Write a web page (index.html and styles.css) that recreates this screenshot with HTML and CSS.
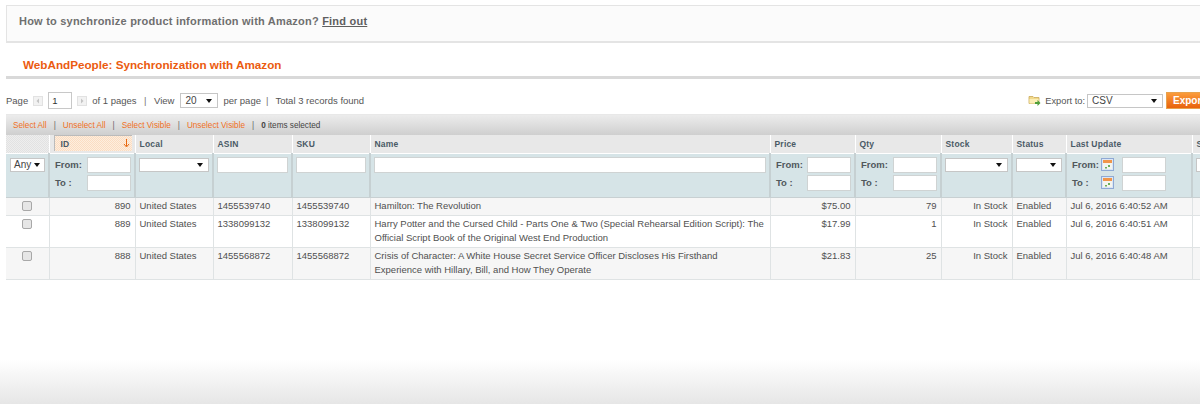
FILE: index.html
```html
<!DOCTYPE html>
<html lang="en">
<head>
<meta charset="utf-8">
<title>WebAndPeople: Synchronization with Amazon</title>
<link rel="stylesheet" href="styles.css">
</head>
<body>
<div class="page">
  <div class="notice">How to synchronize product information with Amazon? <a href="#">Find out</a></div>
  <h3 class="title">WebAndPeople: Synchronization with Amazon</h3>
  <div class="toolbar">
    <div class="pager">
      <span>Page</span>
      <span class="arrow"><svg width="6" height="6" viewBox="0 0 6 6"><path d="M4 0.5 1.5 3 4 5.5z" fill="#c4c4c4"/></svg></span>
      <span class="pageinput">1</span>
      <span class="arrow"><svg width="6" height="6" viewBox="0 0 6 6"><path d="M2 0.5 4.5 3 2 5.5z" fill="#c4c4c4"/></svg></span>
      <span>of 1 pages</span><span class="sep">|</span>
      <span>View</span>
      <span class="select viewsel"><span>20</span><i class="caret"></i></span>
      <span>per page</span><span class="sep sep-tight">|</span>
      <span>Total 3 records found</span>
    </div>
    <div class="export">
      <svg class="exporticon" width="13" height="13" viewBox="0 0 13 13"><path d="M1 2.500h4l1 1h5v6H1z" fill="#f2d98a" stroke="#c9a95a" stroke-width=".8"/><path d="M1.500 5h9v4.500h-9z" fill="#fbeeb5"/><path d="M7 8h2.500V6l3 3-3 3v-2H7z" fill="#4f9e3a"/></svg>
      <span>Export to:</span>
      <span class="select exportsel"><span>CSV</span><i class="caret"></i></span>
      <button class="exportbtn" type="button">Export</button>
    </div>
  </div>
  <div class="massaction">
    <a href="#">Select All</a><span class="sep">|</span><a href="#">Unselect All</a><span class="sep">|</span><a href="#">Select Visible</a><span class="sep">|</span><a href="#">Unselect Visible</a><span class="sep">|</span><span class="count"><strong>0</strong> items selected</span>
  </div>
  <table class="grid">
    <colgroup>
      <col class="c-check"><col class="c-id"><col class="c-local"><col class="c-asin"><col class="c-sku"><col class="c-name"><col class="c-price"><col class="c-qty"><col class="c-stock"><col class="c-status"><col class="c-update"><col class="c-last">
    </colgroup>
    <thead>
      <tr class="heads">
        <th></th>
        <th class="sorted"><span class="sortbox">ID<svg class="sortarrow" width="7" height="9" viewBox="0 0 7 9"><path d="M3.500 0v7M1 5l2.500 3L6 5" fill="none" stroke="#e8670e" stroke-width="1"/></svg></span></th>
        <th>Local</th><th>ASIN</th><th>SKU</th><th>Name</th><th>Price</th><th>Qty</th><th>Stock</th><th>Status</th><th>Last Update</th><th>Store</th>
      </tr>
      <tr class="filters">
        <th><span class="select anysel"><span>Any</span><i class="caret"></i></span></th>
        <th><div class="range"><label>From:</label><span class="input"></span><label>To :</label><span class="input"></span></div></th>
        <th><span class="select"><i class="caret"></i></span></th>
        <th><span class="input"></span></th>
        <th><span class="input"></span></th>
        <th><span class="input"></span></th>
        <th><div class="range"><label>From:</label><span class="input"></span><label>To :</label><span class="input"></span></div></th>
        <th><div class="range"><label>From:</label><span class="input"></span><label>To :</label><span class="input"></span></div></th>
        <th><span class="select"><i class="caret"></i></span></th>
        <th><span class="select"><i class="caret"></i></span></th>
        <th><div class="range daterange">
          <label>From:</label><svg class="cal" width="13" height="13" viewBox="0 0 13 13"><rect x=".5" y=".5" width="12" height="12" fill="#dbe6f5" stroke="#8fa9d4"/><rect x="2" y="2" width="9" height="3" fill="#f0954a"/><rect x="2" y="5" width="9" height="6" fill="#f4f4ee"/><path d="M4 9h2v1.500H4zM7 7h2v2H7z" fill="#6bae5a"/></svg><span class="input"></span>
          <label>To :</label><svg class="cal" width="13" height="13" viewBox="0 0 13 13"><rect x=".5" y=".5" width="12" height="12" fill="#dbe6f5" stroke="#8fa9d4"/><rect x="2" y="2" width="9" height="3" fill="#f0954a"/><rect x="2" y="5" width="9" height="6" fill="#f4f4ee"/><path d="M4 9h2v1.500H4zM7 7h2v2H7z" fill="#6bae5a"/></svg><span class="input"></span>
        </div></th>
        <th><span class="select"><i class="caret"></i></span></th>
      </tr>
    </thead>
    <tbody>
      <tr class="even">
        <td class="ctr"><span class="check"></span></td><td class="num">890</td><td>United States</td><td>1455539740</td><td>1455539740</td><td>Hamilton: The Revolution</td><td class="num">$75.00</td><td class="num">79</td><td class="num">In Stock</td><td>Enabled</td><td>Jul 6, 2016 6:40:52 AM</td><td></td>
      </tr>
      <tr>
        <td class="ctr"><span class="check"></span></td><td class="num">889</td><td>United States</td><td>1338099132</td><td>1338099132</td><td>Harry Potter and the Cursed Child - Parts One &amp; Two (Special Rehearsal Edition Script): The Official Script Book of the Original West End Production</td><td class="num">$17.99</td><td class="num">1</td><td class="num">In Stock</td><td>Enabled</td><td>Jul 6, 2016 6:40:51 AM</td><td></td>
      </tr>
      <tr class="even">
        <td class="ctr"><span class="check"></span></td><td class="num">888</td><td>United States</td><td>1455568872</td><td>1455568872</td><td>Crisis of Character: A White House Secret Service Officer Discloses His Firsthand Experience with Hillary, Bill, and How They Operate</td><td class="num">$21.83</td><td class="num">25</td><td class="num">In Stock</td><td>Enabled</td><td>Jul 6, 2016 6:40:48 AM</td><td></td>
      </tr>
    </tbody>
  </table>
  <div class="fade"></div>
</div>
</body>
</html>
```
FILE: styles.css
```css
* { box-sizing: border-box; }
html, body { margin: 0; height: 404px; overflow: hidden; background: #fff; }
body { font-family: "Liberation Sans", Arial, sans-serif; font-size: 9px; color: #4d4d4d; }
.page { position: relative; width: 1200px; height: 404px; padding: 5px 0 0 6px; overflow: hidden; }
.notice { width: 1200px; height: 38px; border: 1px solid #e4e4e4; border-width: 1px 1px 2px 1px; background: #fbfbfb; padding: 8px 0 0 12px; font-size: 11px; font-weight: bold; letter-spacing: .22px; color: #6f6f6f; line-height: 14px; }
.notice a { color: #5f5f5f; }
.title { width: 1200px; height: 36px; margin: 0; padding: 15px 0 0 17px; border-bottom: 3px solid #d9d9d9; font-size: 11.700px; line-height: 14px; color: #eb5b10; font-weight: bold; }
.toolbar { width: 1250px; height: 35px; padding-top: 13px; display: flex; justify-content: space-between; align-items: flex-start; }
.pager { display: flex; align-items: center; height: 17px; gap: 5px; white-space: nowrap; font-size: 9.500px; color: #555; }
.arrow { width: 10px; height: 10px; border: 1px solid #e2e2e2; background: #f2f2f2; display: flex; align-items: center; justify-content: center; }
.pageinput { width: 24px; height: 17px; border: 1px solid #c8c8c8; padding-left: 3px; line-height: 15px; font-size: 9.500px; color: #333; }
.pager .sep { margin: 0 2.500px; color: #777; }
.pager .sep-tight { margin: 0 2px 0 0; }
.select { position: relative; display: flex; align-items: center; width: 100%; height: 14px; padding-left: 4px; background: #fff; border: 1px solid #c6c6c6; font-size: 10px; color: #444; font-weight: normal; }
.caret { position: absolute; right: 5px; top: 50%; margin-top: -2px; width: 0; height: 0; border: 3px solid transparent; border-top: 4px solid #111; border-bottom: 0; }
.viewsel { width: 38px; height: 15px; margin-left: 1px; }
.export { display: flex; align-items: center; height: 17px; flex: none; white-space: nowrap; gap: 2px; font-size: 9.300px; color: #555; }
.exportsel { width: 76px; height: 14px; margin-right: 1px; }
.exporticon { margin-right: 2px; }
.exportbtn { width: 90px; height: 17px; padding: 0 0 0 6px; border: 1px solid #e8a24d; background: linear-gradient(#fb9c3c, #e8620c); color: #fff; font: bold 10px "Liberation Sans", Arial, sans-serif; text-align: left; }
.massaction { width: 1200px; height: 21px; padding-left: 7px; display: flex; align-items: center; font-size: 8.200px; color: #444; border-top: 1px solid #e8e8e8; background: linear-gradient(#ececec, #cfcfcf); white-space: pre; }
.massaction a { color: #f0701e; text-decoration: none; }
.massaction .sep { margin: 0 7px; color: #666; }
.grid { width: 1250px; table-layout: fixed; border-collapse: collapse; font-size: 9px; }
.c-check { width: 43px; } .c-id { width: 86px; } .c-local { width: 78px; } .c-asin { width: 79px; } .c-sku { width: 78px; } .c-name { width: 400px; } .c-price { width: 85px; } .c-qty { width: 86px; } .c-stock { width: 71px; } .c-status { width: 54px; } .c-update { width: 126px; } .c-last { width: 64px; }
.heads th { height: 18px; padding: 1px 0 0 4px; text-align: left; font-weight: bold; font-size: 8.500px; letter-spacing: .2px; color: #4a5a66; background: repeating-conic-gradient(#e2e2e2 0 25%, #eeeeee 0 50%) 0 0 / 2px 2px; border-right: 1px solid #fff; border-bottom: 1px solid #fff; }
.heads th.sorted { padding: 0 3px 0 4px; vertical-align: top; }
.sortbox { display: flex; align-items: center; justify-content: space-between; height: 16px; padding: 0 2px 0 6px; background: repeating-conic-gradient(#fbdcc2 0 25%, #fdeede 0 50%) 0 0 / 2px 2px; border-top: 1px solid #bbb; border-left: 1px solid #bbb; }
.filters th { height: 44px; padding: 3px 3px 0 3px; text-align: left; vertical-align: top; background: repeating-conic-gradient(#d2e1e4 0 25%, #dae7ea 0 50%) 0 0 / 2px 2px; border-right: 2px solid #c6d0d2; border-bottom: 1px solid #c8d0d2; font-weight: normal; }
.input { display: block; width: 100%; height: 16px; background: #fff; border: 1px solid #cfd3d3; }
.filters .select { margin-top: 1px; }
.range { display: grid; grid-template-columns: 1fr 44px; row-gap: 2px; align-items: center; }
.range label { font-size: 9.500px; font-weight: bold; color: #50585c; padding-left: 2px; }
.daterange { grid-template-columns: 31px 13px 1fr; }
.daterange .input { width: 44px; margin-left: 8px; }
.cal { display: block; }
.anysel { width: 35px; margin-left: 1px; padding-left: 3px; height: 14px; font-size: 10px; }
.anysel .caret { right: 4px; }
tbody td { padding: 1px 4px 2px 4px; border-right: 1px solid #dfe3e4; border-bottom: 1px solid #dfe3e4; vertical-align: top; line-height: 14px; font-size: 9.500px; color: #505050; height: 18px; }
tbody tr.even td { background: #f6f6f6; }
.num { text-align: right; }
.ctr { text-align: center; }
.check { display: inline-block; vertical-align: top; width: 10px; height: 10px; background: #e6e6e6; border: 1px solid #a8a8a8; border-radius: 2px; margin-top: 2px; }
.fade { position: absolute; left: 0; right: 0; bottom: 0; height: 44px; background: linear-gradient(rgba(228,228,228,0), #e6e6e6); pointer-events: none; }
```
